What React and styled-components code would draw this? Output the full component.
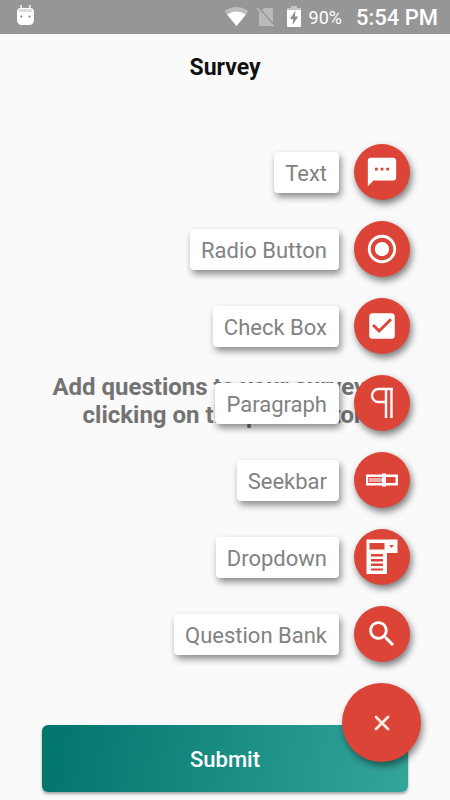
import React from "react";
import styled, { createGlobalStyle } from "styled-components";

const GlobalStyle = createGlobalStyle`
  *, *::before, *::after { box-sizing: border-box; }
  body { margin: 0; background: #fafafa; font-family: Roboto, "Open Sans", sans-serif; }
`;

const Screen = styled.div`
  position: relative;
  display: flex;
  flex-direction: column;
  min-height: 100vh;
  overflow: hidden;
  background: #fafafa;
`;

const StatusBar = styled.div`
  display: flex;
  align-items: center;
  justify-content: space-between;
  height: 34px;
  padding: 0 12px 0 16px;
  background: #969696;
  color: #fff;
`;

const StatusGroup = styled.div`
  display: flex;
  align-items: center;
`;

const StatusIcon = styled.svg`
  display: block;
  width: ${(p) => p.$width}px;
  height: 24px;
  margin-right: ${(p) => p.$gap || 0}px;
`;

const BatteryLevel = styled.span`
  margin-right: 14px;
  padding-top: 2px;
  font-size: 18px;
  line-height: 24px;
`;

const Clock = styled.span`
  padding-top: 2px;
  font-size: 22px;
  font-weight: 500;
  line-height: 28px;
`;

const Header = styled.header`
  display: flex;
  justify-content: center;
  padding: 20px 16px 18px;
`;

const Title = styled.h1`
  margin: 0;
  color: #111;
  font-size: 23px;
  font-weight: 700;
  line-height: 28px;
`;

const Main = styled.main`
  display: flex;
  flex: 1;
  align-items: center;
  justify-content: center;
  padding: 0 42px 24px;
`;

const Message = styled.p`
  margin: 0;
  color: #737373;
  font-size: 24px;
  font-weight: 700;
  line-height: 28px;
  text-align: center;
`;

const Footer = styled.footer`
  display: flex;
  padding: 0 42px 8px;
`;

const SubmitButton = styled.button`
  flex: 1;
  height: 67px;
  padding: 2px 0 0;
  border: 0;
  border-radius: 6px;
  background: linear-gradient(100deg, #00756b, #34a59a);
  box-shadow: 0 2px 3px rgba(0, 0, 0, 0.35);
  color: #fff;
  font-family: inherit;
  font-size: 22px;
  font-weight: 500;
  cursor: pointer;
`;

const SpeedDial = styled.nav`
  position: absolute;
  right: 29px;
  bottom: 38px;
  display: flex;
  flex-direction: column;
  align-items: flex-end;
  gap: 21px;
`;

const Action = styled.button`
  display: flex;
  align-items: center;
  gap: 15px;
  margin-right: 11px;
  padding: 0;
  border: 0;
  background: none;
  font-family: inherit;
  cursor: pointer;
`;

const ActionLabel = styled.span`
  padding: 8px 12px 5px 11px;
  border-radius: 4px;
  background: #fff;
  box-shadow: 2px 4px 7px rgba(0, 0, 0, 0.45);
  color: #828282;
  font-size: 22px;
  line-height: 28px;
`;

const ActionCircle = styled.span`
  display: flex;
  align-items: center;
  justify-content: center;
  width: 56px;
  height: 56px;
  border-radius: 50%;
  background: #db4437;
  box-shadow: 2px 4px 7px rgba(0, 0, 0, 0.5);
`;

const ActionIcon = styled.svg`
  display: block;
  width: ${(p) => p.$size}px;
  height: ${(p) => p.$size}px;
  fill: #fff;
`;

const CloseButton = styled.button`
  display: flex;
  align-items: center;
  justify-content: center;
  width: 79px;
  height: 79px;
  padding: 0;
  border: 0;
  border-radius: 50%;
  background: #db4437;
  box-shadow: 2px 4px 7px rgba(0, 0, 0, 0.45);
  cursor: pointer;
`;

const MaterialIcon = ({ d }) => (
  <ActionIcon $size={34} viewBox="0 0 24 24" aria-hidden="true">
    <path d={d} />
  </ActionIcon>
);

const ParagraphIcon = () => (
  <ActionIcon $size={36} viewBox="0 0 36 36" aria-hidden="true">
    <path
      d="M29 4H14.5a6.500 6.500 0 0 0 0 13H22M22 4V33M27.500 4V33"
      fill="none"
      stroke="#fff"
      strokeWidth="2.4"
    />
  </ActionIcon>
);

const SeekbarIcon = () => (
  <ActionIcon $size={36} viewBox="0 0 36 36" aria-hidden="true">
    <path fillRule="evenodd" d="M2 12.5h32v11H2zM4.2 15v6h14v-6zM22 15v6h9.5v-6z" />
    <path d="M5 16h13v4H5z" fill="#f0aaa4" />
    <path d="M18 11.500h4v13h-4z" />
  </ActionIcon>
);

const DropdownIcon = () => (
  <ActionIcon $size={36} viewBox="0 0 36 36" aria-hidden="true">
    <path d="M2.500 0.500h31v13.500h-10.500v21h-20.500z" />
    <path
      fill="#db4437"
      d="M5.500 4h15v6.500h-15zM25 6h5l-2.500 3zM7 15h12v2.500H7zM7 20h12v2.500H7zM7 24.500h12v2.500H7zM7 29.500h12v2H7z"
    />
  </ActionIcon>
);

const actions = [
  {
    label: "Text",
    icon: (
      <MaterialIcon d="M20 2H4c-1.100 0-2 .9-2 2v18l4-4h14c1.100 0 2-.9 2-2V4c0-1.100-.9-2-2-2zM9 11H7V9h2v2zm4 0h-2V9h2v2zm4 0h-2V9h2v2z" />
    ),
  },
  {
    label: "Radio Button",
    icon: (
      <MaterialIcon d="M12 7c-2.760 0-5 2.240-5 5s2.240 5 5 5 5-2.240 5-5-2.240-5-5-5zm0-5C6.480 2 2 6.480 2 12s4.480 10 10 10 10-4.480 10-10S17.520 2 12 2zm0 18c-4.420 0-8-3.580-8-8s3.580-8 8-8 8 3.580 8 8-3.580 8-8 8z" />
    ),
  },
  {
    label: "Check Box",
    icon: (
      <MaterialIcon d="M19 3H5c-1.110 0-2 .9-2 2v14c0 1.100.89 2 2 2h14c1.110 0 2-.9 2-2V5c0-1.100-.89-2-2-2zm-9 14l-5-5 1.410-1.410L10 14.170l7.590-7.590L19 8l-9 9z" />
    ),
  },
  { label: "Paragraph", icon: <ParagraphIcon /> },
  { label: "Seekbar", icon: <SeekbarIcon /> },
  { label: "Dropdown", icon: <DropdownIcon /> },
  {
    label: "Question Bank",
    icon: (
      <MaterialIcon d="M15.500 14h-.79l-.28-.27C15.410 12.590 16 11.110 16 9.500 16 5.910 13.090 3 9.500 3S3 5.910 3 9.500 5.910 16 9.500 16c1.610 0 3.090-.59 4.230-1.570l.27.28v.79l5 4.990L20.490 19l-4.990-5zm-6 0C7.010 14 5 11.990 5 9.500S7.010 5 9.500 5 14 7.010 14 9.500 11.990 14 9.500 14z" />
    ),
  },
];

export default function App() {
  return (
    <Screen>
      <GlobalStyle />
      <StatusBar>
        <StatusIcon $width={19} viewBox="0 0 19 24" aria-hidden="true">
          <path d="M4.800 0l1 5M14.200 0l-1 5" stroke="#fff" strokeWidth="1.300" />
          <path d="M1 7q0-4 4-4h9q4 0 4 4v7q0 6-5 6H6q-5 0-5-6z" fill="#fff" />
          <path d="M3.500 4h12l1 3h-14z" fill="#ddd" />
          <circle cx="5.300" cy="11.500" r="1" fill="#777" />
          <circle cx="13.500" cy="11.500" r="1" fill="#777" />
        </StatusIcon>
        <StatusGroup>
          <StatusIcon $width={25} $gap={7} viewBox="0 0 25 24" aria-hidden="true">
            <path d="M12.500 21L0.500 6Q12.500-2 24.500 6z" fill="#bdbdbd" />
            <path d="M12.500 21L3 9.500Q12.500 3.500 22 9.500z" fill="#fff" />
          </StatusIcon>
          <StatusIcon $width={20} $gap={11} viewBox="0 0 20 24" aria-hidden="true">
            <path d="M8 3h8q1 0 1 1v16q0 1-1 1H4q-1 0-1-1V8z" fill="#bababa" />
            <path d="M2.200 2.200L18.500 21" stroke="#969696" strokeWidth="2" />
            <path d="M1 3L17.500 21.500" stroke="#bdbdbd" strokeWidth="1.600" />
          </StatusIcon>
          <StatusIcon $width={14} $gap={8} viewBox="0 0 14 24" aria-hidden="true">
            <path d="M4 1h6v2h4v3H0V3h4z" fill="#c4c4c4" />
            <path d="M0 5h14v16q0 1-1 1H1q-1 0-1-1z" fill="#fff" />
            <path d="M8.500 5.500L3 14h3.300L5.500 20l5.700-8.500H7.800z" fill="#8b8b8b" />
          </StatusIcon>
          <BatteryLevel>90%</BatteryLevel>
          <Clock>5:54 PM</Clock>
        </StatusGroup>
      </StatusBar>

      <Header>
        <Title>Survey</Title>
      </Header>

      <Main>
        <Message>Add questions to your survey by clicking on the plus button</Message>
      </Main>

      <Footer>
        <SubmitButton type="button">Submit</SubmitButton>
      </Footer>

      <SpeedDial aria-label="Add question">
        {actions.map(({ label, icon }) => (
          <Action type="button" key={label}>
            <ActionLabel>{label}</ActionLabel>
            <ActionCircle>{icon}</ActionCircle>
          </Action>
        ))}
        <CloseButton type="button" aria-label="Close">
          <ActionIcon $size={20} viewBox="0 0 20 20" aria-hidden="true">
            <path
              d="M4 4l12 12M16 4L4 16"
              stroke="#fbeae8"
              strokeWidth="2.800"
              strokeLinecap="round"
            />
          </ActionIcon>
        </CloseButton>
      </SpeedDial>
    </Screen>
  );
}
